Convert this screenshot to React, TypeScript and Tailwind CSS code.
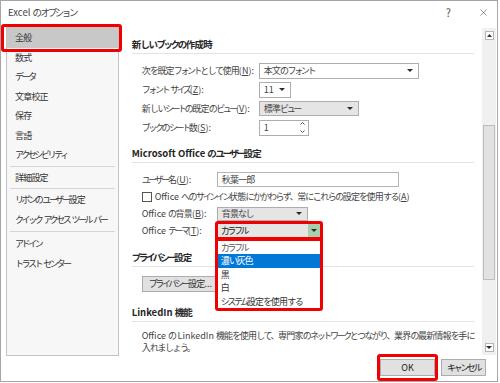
import { X } from "lucide-react";

const GROUPS = [
  ["全般", "数式", "データ", "文章校正", "保存", "言語", "アクセシビリティ"],
  ["詳細設定"],
  ["リボンのユーザー設定", "クイック アクセス ツール バー"],
  ["アドイン", "トラスト センター"],
];

const THEMES = ["カラフル", "濃い灰色", "黒", "白", "システム設定を使用する"];

// Meiryo UI draws katakana narrow and latin at its normal width; split the runs to get close to that
const RUNS = /([\u30A0-\u30FF]+|[\u4E00-\u9FFF]+|[\x20-\x7E]+)/;

function J({ t }: { t: string }) {
  return (
    <>
      {t
        .split(RUNS)
        .filter(Boolean)
        .map((s, i) =>
          /^[\u30A0-\u30FF]/.test(s) ? (
            <span key={i} className="tracking-[-2.4px]">{s}</span>
          ) : /^[\u4E00-\u9FFF]/.test(s) ? (
            <span key={i} className="tracking-[-0.8px]">{s}</span>
          ) : /^[\x20-\x7E]/.test(s) ? (
            <span key={i} className="tracking-normal">{s}</span>
          ) : (
            <span key={i}>{s}</span>
          )
        )}
    </>
  );
}

function Lbl({ t, k }: { t: string; k: string }) {
  return (
    <>
      <J t={t} />
      <span className="tracking-normal">
        (<span className="underline underline-offset-1">{k}</span>):
      </span>
    </>
  );
}

function Caret() {
  return (
    <svg width="6" height="3" viewBox="0 0 6 3" className="shrink-0">
      <path d="M0 0h6L3 3z" fill="#2b2b2b" />
    </svg>
  );
}

function Header({ t, className = "" }: { t: string; className?: string }) {
  return (
    <div className={`border-b border-[#e3e3e3] pb-[2px] text-[9.5px] font-bold leading-[14px] text-[#262626] ${className}`}>
      <J t={t} />
    </div>
  );
}

export default function App() {
  return (
    <div className='w-[498px] h-[382px] border border-[#a6a6a6] bg-white flex flex-col text-[9px] tracking-[-1.5px] text-[#444] whitespace-nowrap font-["Noto_Sans_CJK_JP",sans-serif]'>
      {/* title bar */}
      <div className="h-[25px] flex items-start pt-[4px] pl-[7px] pr-[8px]">
        <span className="text-[9.5px] leading-[15px] text-[#444]">
          <J t="Excel のオプション" />
        </span>
        <span className="ml-auto text-[11px] tracking-normal leading-[15px] text-[#555]">?</span>
        <X className="ml-[27px] mt-[2px]" size={11} strokeWidth={1.2} color="#444" />
      </div>

      <div className="flex h-[330px]">
        {/* sidebar */}
        <div className="ml-[5px] mt-[1px] w-[114px] h-[329px] border border-[#c3c3c3] bg-[#f7f7f7] text-[#333]">
          {GROUPS.map((g, gi) => (
            <div key={gi}>
              {gi === 1 && <div className="mx-[3px] my-[1px] border-t border-[#d6d6d6]" />}
              {gi === 2 && <div className="mx-[3px] my-[1px] border-t border-[#d6d6d6]" />}
              {gi === 3 && <div className="mx-[3px] my-[2px] border-t border-[#d6d6d6]" />}
              {g.map((item) => (
                <div
                  key={item}
                  className={`relative h-[19.5px] flex items-center pl-[8px] ${item === "全般" ? "bg-[#c8c8c8]" : ""}`}
                >
                  <span>
                    <J t={item} />
                  </span>
                  {item === "全般" && (
                    <div className="absolute -left-[6px] -top-[4px] -right-[4px] -bottom-[4px] border-[3px] border-[#f00000] rounded-[3px]" />
                  )}
                </div>
              ))}
            </div>
          ))}
        </div>

        {/* main */}
        <div className="flex-1 flex">
          <div className="flex-1 min-w-0 pl-[13px] pr-[8px] pt-[11px] h-[328px] overflow-hidden">
            <Header t="新しいブックの作成時" />
            <div className="mt-[7px] pl-[10px]">
              <div className="h-[19px] flex items-center">
                <span className="w-[117px] shrink-0"><Lbl t="次を既定フォントとして使用" k="N" /></span>
                <div className="w-[160px] h-[16px] border border-[#adadad] bg-white flex items-center pl-[4px] pr-[5px]">
                  <span className="flex-1"><J t="本文のフォント" /></span>
                  <Caret />
                </div>
              </div>
              <div className="h-[19px] flex items-center">
                <span className="w-[117px] shrink-0"><Lbl t="フォント サイズ" k="Z" /></span>
                <div className="w-[32px] h-[16px] border border-[#adadad] bg-white flex items-center pl-[4px] pr-[5px]">
                  <span className="flex-1 tracking-normal">11</span>
                  <Caret />
                </div>
              </div>
              <div className="h-[19px] flex items-center">
                <span className="w-[117px] shrink-0"><Lbl t="新しいシートの既定のビュー" k="V" /></span>
                <div className="w-[100px] h-[15px] border border-[#adadad] bg-[#e5e5e5] flex items-center pl-[4px] pr-[5px]">
                  <span className="flex-1"><J t="標準ビュー" /></span>
                  <Caret />
                </div>
              </div>
              <div className="h-[19px] flex items-center">
                <span className="w-[117px] shrink-0"><Lbl t="ブックのシート数" k="S" /></span>
                <div className="w-[50px] h-[16px] border border-[#adadad] bg-white flex items-center pl-[4px] pr-[3px]">
                  <span className="flex-1">1</span>
                  <div className="flex flex-col gap-[5px]">
                    <svg width="5" height="3" viewBox="0 0 5 3"><path d="M0.5 2.5L2.5 0.5L4.5 2.5" stroke="#555" fill="none" /></svg>
                    <svg width="5" height="3" viewBox="0 0 5 3"><path d="M0.5 0.5L2.5 2.5L4.5 0.5" stroke="#555" fill="none" /></svg>
                  </div>
                </div>
              </div>
            </div>

            <Header t="Microsoft Office のユーザー設定" className="mt-[9px]" />
            <div className="mt-[8px] pl-[10px]">
              <div className="h-[17px] flex items-center">
                <span className="w-[75px] shrink-0"><Lbl t="ユーザー名" k="U" /></span>
                <div className="w-[182px] h-[15px] border border-[#b3b3b3] bg-white flex items-center pl-[4px]">
                  <span><J t="秋葉一郎" /></span>
                </div>
              </div>
              <div className="h-[17px] flex items-center gap-[3px]">
                <div className="w-[10px] h-[10px] border border-[#555] bg-white shrink-0" />
                <span>
                  <J t="Office へのサインイン状態にかかわらず、常にこれらの設定を使用する" />
                  <span className="tracking-normal">(<span className="underline underline-offset-1">A</span>)</span>
                </span>
              </div>
              <div className="h-[17px] flex items-center">
                <span className="w-[75px] shrink-0"><Lbl t="Office の背景" k="B" /></span>
                <div className="w-[91px] h-[14px] border border-[#adadad] bg-[#e5e5e5] flex items-center pl-[4px] pr-[5px]">
                  <span className="flex-1"><J t="背景なし" /></span>
                  <Caret />
                </div>
              </div>
              <div className="h-[17px] flex items-center">
                <span className="w-[76px] shrink-0"><Lbl t="Office テーマ" k="T" /></span>
                <div className="relative z-10 w-[102px] h-[13px]">
                  <div className="h-[13px] bg-[#e5e5e5] flex items-center">
                    <span className="flex-1 pl-[3px] text-[#222]"><J t="カラフル" /></span>
                    <div className="w-[12px] h-[13px] bg-[#a6d1ac] flex items-center justify-center">
                      <Caret />
                    </div>
                  </div>
                  <div className="absolute left-0 top-[13px] w-[102px] border-t-[4px] border-[#f00000] bg-white pb-[2px]">
                    {THEMES.map((t, i) => (
                      <div
                        key={t}
                        className={`h-[13.4px] flex items-center pl-[3px] ${i === 1 ? "bg-[#0078d7] text-white" : i === 0 ? "text-[#555]" : "text-[#333]"}`}
                      >
                        <span><J t={t} /></span>
                      </div>
                    ))}
                  </div>
                  <div className="absolute -left-[3px] -top-[3px] w-[108px] h-[90px] border-[3px] border-[#f00000] rounded-[3px]" />
                </div>
              </div>
            </div>

            <Header t="プライバシー設定" className="mt-[11px]" />
            <div className="mt-[9px] pl-[10px] flex">
              <div className="h-[16px] border border-[#adadad] bg-[#e1e1e1] flex items-center px-[6px] text-[#333]">
                <span><J t="プライバシー設定..." /></span>
              </div>
            </div>

            <Header t="LinkedIn 機能" className="mt-[13px]" />
            <p className="mt-[8px] pl-[10px] leading-[12px]">
              <J t="Office の LinkedIn 機能を使用して、専門家のネットワークとつながり、業界の最新情報を手に" />
              <br />
              <J t="入れましょう。" />
            </p>
          </div>

          {/* scrollbar */}
          <div className="w-[14px] mr-[1px] mt-[2px] mb-[1px] bg-[#f0f0f0] flex flex-col items-center">
            <div className="mt-[3px] w-[9px] h-[9px] border border-[#b5b5b5] bg-white flex items-center justify-center">
              <svg width="5" height="3" viewBox="0 0 5 3"><path d="M0 3h5L2.5 0z" fill="#333" /></svg>
            </div>
            <div className="mt-[85px] w-[12px] h-[155px] border border-[#bdbdbd] bg-[#e2e2e2]" />
            <div className="flex-1" />
            <div className="mb-[3px] w-[9px] h-[9px] border border-[#b5b5b5] bg-white flex items-center justify-center">
              <Caret />
            </div>
          </div>
        </div>
      </div>

      {/* footer */}
      <div className="-mt-[2px] h-[27px] flex items-center justify-end pr-[11px]">
        <div className="border-[3px] border-[#f00000] rounded-[3px] py-[2px]">
          <div className="w-[55px] h-[17px] border border-[#adadad] bg-[#e1e1e1] flex items-center justify-center text-[#222] tracking-normal">OK</div>
        </div>
        <div className="ml-[3px] w-[45px] h-[17px] border border-[#adadad] bg-[#e1e1e1] flex items-center justify-center text-[#222]">
          <span><J t="キャンセル" /></span>
        </div>
      </div>
    </div>
  );
}
